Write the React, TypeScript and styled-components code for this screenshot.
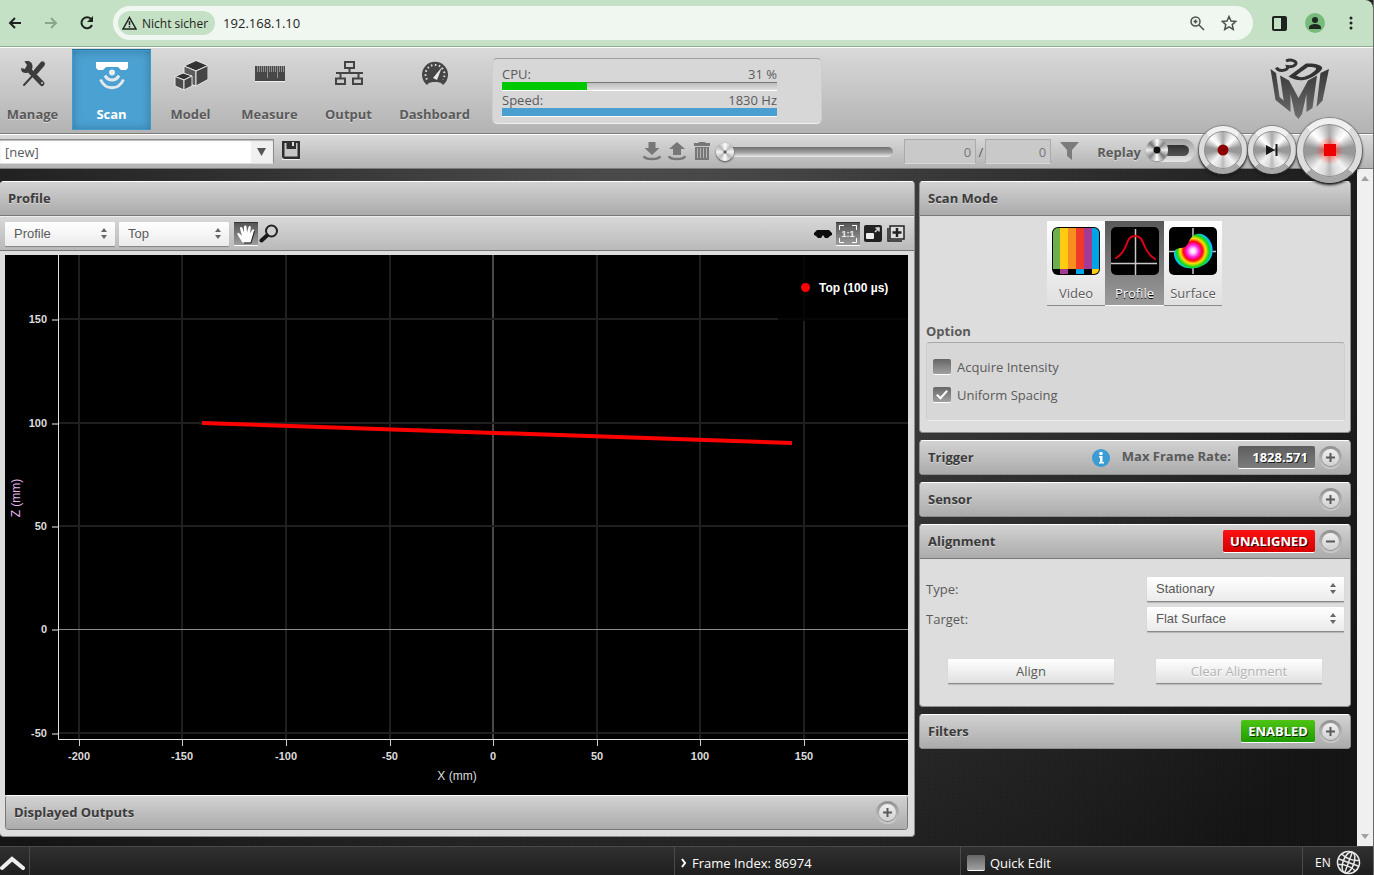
import React from "react";
import styled, { createGlobalStyle, css } from "styled-components";

const sans = `"Open Sans", "Noto Sans", sans-serif`;
const arial = `"Liberation Sans", Arial, sans-serif`;

const GlobalStyle = createGlobalStyle`
  *, *::before, *::after { box-sizing: border-box; }
  body { margin: 0; font-family: ${sans}; font-size: 13px; color: #5a5a5a; background: #222; }
  button, input, select { font: inherit; color: inherit; margin: 0; }
  button { border: 0; padding: 0; background: none; cursor: pointer; }
  svg { display: block; flex: none; }
  h2, p { margin: 0; }
`;

const Page = styled.div`
  display: flex;
  flex-direction: column;
  min-height: 100vh;
  border-right: 1px solid #6a6a6a;
`;

/* ---------- browser bar ---------- */

const BrowserBar = styled.div`
  display: flex;
  align-items: center;
  height: 47px;
  padding: 0 12px 0 6px;
  background: #c5e1c5;
  border-bottom: 1px solid #8fae90;
  border-top-right-radius: 8px;
  color: #1f2a20;
`;

const BrowserButton = styled.button<{ $dim?: boolean }>`
  display: grid;
  place-items: center;
  width: 18px;
  height: 24px;
  margin-right: 18px;
  color: ${(p) => (p.$dim ? "#8ba58c" : "#1f2320")};
`;

const AddressBar = styled.div`
  display: flex;
  flex: 1;
  align-items: center;
  height: 34px;
  margin: 0 0 0 -1px;
  padding: 0 16px 0 5px;
  gap: 8px;
  border-radius: 17px;
  background: #f0f7f0;
`;

const SecurityChip = styled.button`
  display: flex;
  align-items: center;
  gap: 5px;
  height: 24px;
  padding: 0 7px 0 4px;
  border-radius: 12px;
  background: #c5e1c5;
  color: #1f2320;
  font-size: 12px;
`;

const AddressInput = styled.input`
  flex: 1;
  min-width: 0;
  border: 0;
  outline: 0;
  padding: 0;
  background: transparent;
  color: #1f2320;
  font-size: 13px;
`;

const AddressIcon = styled.button`
  display: grid;
  place-items: center;
  width: 16px;
  height: 24px;
  margin-left: 8px;
  color: #4b524c;
`;

const BrowserTool = styled.button`
  display: grid;
  place-items: center;
  width: 20px;
  height: 24px;
  margin-left: 16px;
  color: #1f2320;
`;

/* ---------- main header ---------- */

const Header = styled.header`
  display: flex;
  height: 87px;
  border-top: 1px solid #fff;
  border-bottom: 1px solid #7d7d7d;
  background: linear-gradient(#d9d9d9, #b3b3b3);
`;

const Nav = styled.nav`
  display: flex;
  margin: 1px 0 0 -7px;
`;

const NavButton = styled.button<{ $active?: boolean }>`
  display: flex;
  flex-direction: column;
  align-items: center;
  width: 79px;
  height: 81px;
  padding-top: 9px;
  font-weight: 700;
  line-height: 18px;
  color: #5a5a5a;
  text-shadow: 0 1px 0 #dcdcdc;
  svg { margin-bottom: 13px; }
  &:last-child { width: 93px; }
  ${(p) =>
    p.$active &&
    css`
      color: #fff;
      text-shadow: none;
      background: #4ba1d1;
      border-top: 1px solid #1f6c98;
      padding-top: 8px;
      box-shadow: inset 0 0 0 1px #419aca, inset 0 0 10px #2f7298;
    `}
`;

const StatsBox = styled.section`
  width: 330px;
  height: 66px;
  margin: 10px 0 0 11px;
  padding: 6px 44px 0 9px;
  border: 1px solid #cdcdcd;
  border-top-color: #a0a0a0;
  border-bottom-color: #eee;
  border-radius: 5px;
  background: #d7d7d7;
`;

const StatRow = styled.div`
  display: flex;
  justify-content: space-between;
  height: 17px;
  line-height: 19px;
`;

const StatBar = styled.div`
  height: 9px;
  border-bottom: 1px solid #fff;
  background: linear-gradient(#777 0 1px, #bcbcbc 1px, #dedede);
`;

const StatFill = styled.div<{ $color: string }>`
  height: 100%;
  background: ${(p) => p.$color};
`;

const Logo = styled.a`
  margin: 10px 43px 0 auto;
`;

/* ---------- file / replay bar ---------- */

const FileBar = styled.div`
  position: relative;
  z-index: 2;
  display: flex;
  align-items: center;
  height: 35px;
  padding-right: 11px;
  border-top: 1px solid #fff;
  border-bottom: 1px solid #7d7d7d;
  background: linear-gradient(#dadada, #b3b3b3);
`;

const JobPicker = styled.label`
  position: relative;
  width: 274px;
  height: 25px;
  margin-right: 8px;
  svg { position: absolute; right: 8px; top: 8px; pointer-events: none; }
`;

const JobSelect = styled.select`
  appearance: none;
  width: 100%;
  height: 100%;
  padding: 0 24px 0 5px;
  border: 1px solid #8c8c8c;
  border-left: 0;
  border-bottom-color: #ddd;
  border-radius: 0;
  background: linear-gradient(90deg, #fff calc(100% - 22px), #f0f0f0 calc(100% - 22px));
  box-shadow: inset 0 1px 1px #bbb;
  color: #5a5a5a;
`;

const IconButton = styled.button`
  display: grid;
  place-items: center;
  height: 24px;
  margin-bottom: 2px;
  color: #777;
`;

const ReplayFiles = styled.div`
  display: flex;
  gap: 7px;
  margin: 0 5px 0 auto;
`;

const Slider = styled.input`
  appearance: none;
  width: 177px;
  height: 20px;
  background: transparent;
  &::-webkit-slider-runnable-track {
    height: 10px;
    border-radius: 5px;
    background: linear-gradient(#6f6f6f, #a2a2a2 55%, #eee);
  }
  &::-webkit-slider-thumb {
    appearance: none;
    width: 18px;
    height: 18px;
    margin-top: -4px;
    border-radius: 50%;
    border: 0;
    background: radial-gradient(circle, #555 0 1px, transparent 2px),
      conic-gradient(#fff, #bbb 45deg, #f6f6f6 90deg, #b5b5b5 135deg, #fff 180deg, #bbb 225deg, #f6f6f6 270deg, #b5b5b5 315deg, #fff);
    box-shadow: 0 1px 2px #444;
  }
`;

const FrameInput = styled.input`
  width: 72px;
  height: 25px;
  margin-left: 11px;
  padding: 0 4px;
  border: 1px solid #ababab;
  border-bottom-color: #d8d8d8;
  border-radius: 0;
  background: #c9c9c9;
  text-align: right;
  color: #777;
`;

const Slash = styled.span`
  width: 9px;
  text-align: center;
`;

const TotalInput = styled(FrameInput)`
  width: 66px;
  margin: 0 9px 0 0;
`;

const ReplayLabel = styled.label`
  display: flex;
  align-items: center;
  gap: 5px;
  margin: 0 3px 0 18px;
  font-weight: 700;
  text-shadow: 0 1px 0 #ddd;
`;

const ReplaySwitch = styled.input`
  appearance: none;
  display: flex;
  align-items: center;
  width: 49px;
  height: 23px;
  margin-bottom: 3px;
  border-radius: 12px;
  background: linear-gradient(#9f9f9f, #e6e6e6);
  &::before {
    content: "";
    z-index: 1;
    width: 22px;
    height: 22px;
    border-radius: 50%;
    background: radial-gradient(circle, #111 0 3px, transparent 4px),
      conic-gradient(#fff, #888 45deg, #eee 90deg, #777 135deg, #fff 180deg, #888 225deg, #eee 270deg, #777 315deg, #fff);
    box-shadow: 0 1px 1px #888;
  }
  &::after {
    content: "";
    width: 26px;
    height: 11px;
    margin-left: -5px;
    border-radius: 6px;
    background: linear-gradient(#303030, #555);
  }
`;

const DialButton = styled.button<{ $size: number; $glow?: boolean }>`
  display: grid;
  place-items: center;
  flex: none;
  width: ${(p) => p.$size}px;
  height: ${(p) => p.$size}px;
  margin: 0 0 3px 1px;
  border-radius: 50%;
  border: ${(p) => (p.$size > 50 ? 6 : 5)}px solid #dcdcdc;
  border-bottom-color: #a8a8a8;
  border-top-color: #f0f0f0;
  background: ${(p) => (p.$glow ? "radial-gradient(circle, rgba(255, 60, 48, 0.55) 0 6px, transparent 14px)," : "")}
    conic-gradient(#aaa, #efefef 30deg, #fff 45deg, #999 80deg, #999 100deg, #f2f2f2 140deg, #ddd 165deg, #bbb 180deg, #ddd 195deg, #f2f2f2 220deg, #999 260deg, #999 280deg, #fff 315deg, #efefef 330deg, #aaa);
  background-origin: border-box;
  box-shadow: inset 0 0 0 1px #8c8c8c, 0 2px 3px #111, 0 0 1px 1px #8a8a8a;
`;

/* ---------- workspace ---------- */

const Body = styled.div`
  display: flex;
  flex: 1;
`;

const Workspace = styled.main`
  display: flex;
  flex: 1;
  align-items: flex-start;
  gap: 4px;
  min-width: 0;
  padding: 12px 6px 8px 0;
  background:
    repeating-linear-gradient(90deg, rgba(255, 255, 255, 0.01) 0 1px, transparent 1px 3px),
    repeating-linear-gradient(rgba(0, 0, 0, 0.05) 0 1px, transparent 1px 4px),
    radial-gradient(ellipse 62% 120% at 47% 15%, #525252, #303030 50%, #141414);
`;

const ScrollBar = styled.div`
  display: flex;
  flex-direction: column;
  align-items: center;
  justify-content: space-between;
  width: 16px;
  padding: 7px 0;
  background: #f0f0f0;
`;

const Panel = styled.section`
  border: 1px solid #8d8d8d;
  border-top-color: #fff;
  border-radius: 4px;
  background: #dddddd;
`;

const ViewerPanel = styled(Panel)`
  flex: 1;
  min-width: 0;
  border-left: 0;
`;

const SideColumn = styled.aside`
  display: flex;
  flex: 0 0 432px;
  flex-direction: column;
  gap: 7px;
`;

const PanelHeader = styled.div<{ $open?: boolean }>`
  display: flex;
  align-items: center;
  height: ${(p) => (p.$open ? 34 : 33)}px;
  padding: 0 8px;
  border-bottom: ${(p) => (p.$open ? "1px solid #777" : "0")};
  border-radius: 3px 3px ${(p) => (p.$open ? "0 0" : "3px 3px")};
  background: linear-gradient(#d2d2d2, #ababab);
`;

const PanelTitle = styled.h2`
  padding-bottom: 2px;
  font-size: 13px;
  font-weight: 700;
  color: #3b3b3b;
  text-shadow: 0 1px 0 #d8d8d8;
`;

const HeaderTools = styled.div`
  display: flex;
  align-items: center;
  gap: 4px;
  margin-left: auto;
`;

const ExpandButton = styled.button`
  display: grid;
  place-items: center;
  width: 23px;
  height: 23px;
  border-radius: 50%;
  background: linear-gradient(#8f8f8f, #c8c8c8 90%);
  &::before { content: ""; grid-area: 1 / 1; width: 17px; height: 17px; border-radius: 50%; background: linear-gradient(#f0f0f0, #d0d0d0); box-shadow: 0 1px 1px #888; }
  svg { grid-area: 1 / 1; }
`;

const StatusTag = styled.output<{ $tone: "grey" | "red" | "green" }>`
  display: block;
  height: 23px;
  padding: 0 7px;
  border-radius: 2px;
  border-bottom: 1px solid #fff;
  color: #fff;
  font-weight: 700;
  line-height: 22px;
  text-shadow: 1px 1px 0 rgba(0, 0, 0, 0.75);
  background: ${(p) =>
    ({
      grey: "linear-gradient(#5e5e5e, #7c7c7c)",
      red: "linear-gradient(#fb1212, #d60000)",
      green: "linear-gradient(#4dc414, #1f9c00)",
    })[p.$tone]};
  ${(p) => p.$tone === "grey" && "min-width: 77px; text-align: right;"}
`;

const FrameRateLabel = styled.span`
  margin: 0 3px 0 8px;
  padding-bottom: 4px;
  font-weight: 700;
`;

const ViewerToolbar = styled.div`
  display: flex;
  align-items: center;
  height: 35px;
  padding: 0 8px 0 5px;
  gap: 4px;
  border-top: 1px solid #eee;
  border-bottom: 1px solid #777;
  background: linear-gradient(#d8d8d8, #bababa);
`;

const SelectBox = styled.span<{ $width: number }>`
  position: relative;
  display: block;
  width: ${(p) => p.$width}px;
  height: 24px;
  svg { position: absolute; right: 7px; top: 6px; pointer-events: none; }
`;

const SelectInput = styled.select`
  appearance: none;
  width: 100%;
  height: 100%;
  padding: 0 20px 1px 9px;
  border: 0;
  border-radius: 1px;
  background: linear-gradient(#fff, #ebebeb);
  box-shadow: 0 1px 0 #8a8a8a, 0 2px 1px #b5b5b5;
  font-family: ${arial};
  color: #5a5a5a;
`;

const ToolButton = styled.button<{ $pressed?: boolean }>`
  display: grid;
  place-items: center;
  width: ${(p) => (p.$pressed ? 24 : 20)}px;
  height: 24px;
  color: #1c1c1c;
  ${(p) =>
    p.$pressed &&
    css`
      background: linear-gradient(#555, #9d9d9d);
      border-top: 1px solid #333;
      border-bottom: 1px solid #fff;
    `}
`;

const ToolGroup = styled.div<{ $end?: boolean }>`
  display: flex;
  gap: ${(p) => (p.$end ? 3 : 1)}px;
  margin-left: ${(p) => (p.$end ? "auto" : "1px")};
`;

const ViewerContent = styled.div`
  padding: 4px 6px 6px 5px;
`;

const Chart = styled.svg`
  width: 100%;
  height: auto;
  background: #000;
  font-family: ${arial};
`;

const OutputsPanel = styled(Panel)`
  border-color: #fff #777 #777;
`;

const ScanBody = styled.div`
  padding: 5px 5px 11px 6px;
`;

const ModeGroup = styled.div`
  display: flex;
  justify-content: center;
  margin-right: 2px;
`;

const ModeButton = styled.button<{ $active?: boolean }>`
  display: flex;
  flex-direction: column;
  align-items: center;
  gap: 8px;
  width: ${(p) => (p.$active ? 59 : 58)}px;
  height: 85px;
  padding-top: 6px;
  border-bottom: 1px solid ${(p) => (p.$active ? "#fff" : "#8a8a8a")};
  background: ${(p) => (p.$active ? "linear-gradient(#585858, #9c9c9c)" : "linear-gradient(#fff, #e0e0e0)")};
  color: ${(p) => (p.$active ? "#fff" : "#5a5a5a")};
  text-shadow: ${(p) => (p.$active ? "0 1px 0 #000" : "0 1px 0 #fff")};
  line-height: 20px;
`;

const OptionTitle = styled.h2`
  margin: 15px 0 1px;
  font-size: 13px;
  line-height: 20px;
`;

const OptionBox = styled.div`
  height: 79px;
  padding: 10px 6px;
  border: 1px solid #cfcfcf;
  border-top-color: #a8a8a8;
  border-bottom-color: #eee;
  border-radius: 4px;
  background: #d7d7d7;
`;

const CheckLabel = styled.label`
  display: flex;
  align-items: center;
  gap: 6px;
  height: 28px;
`;

const CheckInput = styled.input`
  appearance: none;
  display: grid;
  place-items: center;
  width: 18px;
  height: 16px;
  border-radius: 2px;
  border-bottom: 1px solid #fff;
  background: linear-gradient(#666, #a0a0a0);
  &:checked::after {
    content: "";
    width: 6px;
    height: 11px;
    margin-top: -3px;
    border: solid #fff;
    border-width: 0 2px 2px 0;
    transform: rotate(42deg);
  }
`;

const AlignBody = styled.div`
  padding: 18px 6px 22px;
`;

const Field = styled.label`
  display: flex;
  align-items: center;
  justify-content: space-between;
  height: 24px;
  margin-bottom: 6px;
`;

const ActionRow = styled.div`
  display: flex;
  justify-content: space-between;
  margin: 28px 22px 0;
`;

const ActionButton = styled.button`
  width: 166px;
  height: 25px;
  border-bottom: 1px solid #8a8a8a;
  border-radius: 1px;
  background: linear-gradient(#fff, #e0e0e0);
  box-shadow: 0 1px 1px #bbb;
  color: #5a5a5a;
  &:disabled { color: #b3b3b3; text-shadow: 0 1px 0 #fff; }
`;

/* ---------- footer ---------- */

const Footer = styled.footer`
  display: flex;
  height: 29px;
  border-top: 1px solid #4a4a4a;
  background: linear-gradient(#303030, #1f1f1f);
  color: #fff;
`;

const FooterCell = styled.div<{ $width?: number }>`
  display: flex;
  align-items: center;
  gap: 5px;
  flex: ${(p) => (p.$width ? `0 0 ${p.$width}px` : "1")};
  padding: 3px 0 0 6px;
  border-left: 1px solid #4a4a4a;
`;

const LogToggle = styled.button`
  width: 29px;
  padding-top: 4px;
`;

const Language = styled.button`
  display: flex;
  align-items: center;
  gap: 5px;
  flex: 0 0 71px;
  padding: 2px 0 0 12px;
  border-left: 1px solid #4a4a4a;
  color: #fff;
  font-size: 12px;
`;

/* ---------- drawings ---------- */

const ToolsIcon = () => (
  <svg width="32" height="34" viewBox="0 0 32 34">
    <g stroke="#3c3c3c" fill="none" strokeLinecap="round">
      <path d="M25.500 6 19 13.500" strokeWidth="5" />
      <path d="M19 14 7 27" strokeWidth="2" />
      <path d="M11 11 25 25.500" strokeWidth="5" />
    </g>
    <path d="M4 10 8 11l2-4-2.500-3.500c5-1.500 8.500 1 8 6-1 5-8 7.500-11 3.500z" fill="#3c3c3c" />
    <circle cx="25" cy="25" r="1" fill="#ccc" />
  </svg>
);

const ScanIcon = () => (
  <svg width="32" height="34" viewBox="0 0 32 34">
    <path d="M0 4h32v6l-2 2h-5l-3-3H10l-3 3H2l-2-2z" fill="#fff" />
    <circle cx="16" cy="14.500" r="3" fill="#e8eef2" />
    <g fill="none" stroke="#e3e9ed" strokeWidth="3">
      <path d="M9 17.500c3 6 11 6 14 0" />
      <path d="M4.500 21.500c5 11 18 11 23 0" />
    </g>
  </svg>
);

const ModelIcon = () => (
  <svg width="34" height="34" viewBox="0 0 34 34">
    <g stroke="#e6e6e6" strokeWidth="1" strokeLinejoin="round">
      <path d="M10 8 22 2.500 34 7.500 22 13z" fill="#333" />
      <path d="M10 8l12 5v15l-12-4z" fill="#5c5c5c" />
      <path d="M22 13l12-5.500v14L22 28z" fill="#454545" />
      <path d="m1 18.500 8-3.500 9 3-8 4z" fill="#333" />
      <path d="m1 18.500 9 3.500v10l-9-4z" fill="#4c4c4c" />
      <path d="m10 22 8-4v10l-8 4z" fill="#454545" />
    </g>
  </svg>
);

const MeasureIcon = () => (
  <svg width="32" height="34" viewBox="0 0 32 34">
    <path d="M1 8h30v15H1z" fill="#474747" />
    <path d="M1 23.500h30" stroke="#eee" />
    <path d="M3.500 8v6M5.500 8v6M7.500 8v6M9.500 8v6M11.500 8v6M13.500 8v12M15.500 8v6M17.500 8v6M19.500 8v6M21.500 8v6M23.500 8v12M25.500 8v6M27.500 8v6M29.500 8v6" stroke="#8f8f8f" />
  </svg>
);

const OutputIcon = () => (
  <svg width="30" height="34" viewBox="0 0 30 34">
    <g fill="none" stroke="#444" strokeWidth="2">
      <path d="M11 4h9v6h-9zM2 20.500h9v5.500H2zM19 20.500h9v5.500h-9zM15.500 10v5M6.500 20v-5h18v5M2 15h27" />
    </g>
  </svg>
);

const DashboardIcon = () => (
  <svg width="28" height="34" viewBox="0 0 28 34">
    <path d="M6 27a13 13 0 1 1 16 0c-2-3-5-3-8-3s-6 0-8 3z" fill="#454545" />
    <path d="M6 21.500a9.500 9.500 0 1 1 16 0" fill="none" stroke="#ddd" strokeWidth="2" strokeDasharray="1.500 2.500" />
    <path d="m12 20 9-11-5 13z" fill="#e8e8e8" />
  </svg>
);

const LogoMark = () => (
  <svg width="60" height="62" viewBox="0 0 60 62">
    <defs>
      <linearGradient id="metal" x1="0" y1="10" x2="0" y2="60" gradientUnits="userSpaceOnUse">
        <stop offset="0" stopColor="#363636" />
        <stop offset="1" stopColor="#6c6c6c" />
      </linearGradient>
    </defs>
    <g fill="url(#metal)">
      <path d="M.5 11l5.500 4L9.500 39 20.500 48.500V54L5.500 42z" />
      <path d="M59 11l-8.500 4L46.500 49l6-6.500z" />
      <path d="M10 17.500l9 5L28.500 40 38 22.500l9-5L42.500 50l-6 4V36L32 56l-3.500 5L25 57l-4.500-21v13L14 45z" />
    </g>
    <path d="M6.500 9.500C8 14 19 13 17.500 8.500C24 9.500 28 5.500 25 3.500C22 1.500 19 1.500 16 3" fill="none" stroke="#333" strokeWidth="3" />
    <path
      fill="#333"
      fillRule="evenodd"
      d="M18.500 18.500L36 5.500C44 5 54 7 52 11C50 15 40 21 34 22C29 23 23 21.500 18.500 18.500zM26 17.500L38 9C43 9 47 9.500 46 11.500C43 15 37 18.500 33 19C30 19.500 28 18.500 26 17.500z"
    />
  </svg>
);

const FloppyIcon = () => (
  <svg width="18" height="19" viewBox="0 0 18 19">
    <path d="M0 0h18v18H2l-2-2z" fill="#2e2e2e" />
    <path d="M2.500 8h13v7.500h-13z" fill="#c6c6c6" />
    <path d="M2.500 2h2v6h-2zM14 2h1.500v6H14z" fill="#c6c6c6" />
    <path d="M10 1h2v4h-2z" fill="#ddd" />
    <path d="M0 18.500h18" stroke="#f0f0f0" />
  </svg>
);

const TransferIcon = ({ up }: { up?: boolean }) => (
  <svg width="18" height="20" viewBox="0 0 18 20">
    <path d={up ? "M9 1l8 7h-4v6H5V8H1z" : "M5.500 1h7v6h4L9 14 1.500 7h4z"} fill="currentColor" />
    <path d="M1 15c1 4 15 4 16 0" fill="none" stroke="currentColor" strokeWidth="2.500" />
  </svg>
);

const TrashIcon = () => (
  <svg width="18" height="20" viewBox="0 0 18 20">
    <path d="M1 2h4l1-1h6l1 1h4v3H1zM2 6h14v13H2z" fill="currentColor" />
    <path d="M4.500 7v10M7.500 7v10M10.500 7v10M13.500 7v10" stroke="#b4b4b4" />
  </svg>
);

const FunnelIcon = () => (
  <svg width="19" height="20" viewBox="0 0 19 20">
    <path d="M0 1h19l-7 8v10l-5-4V9z" fill="#7b7b7b" />
  </svg>
);

const StepperArrows = () => (
  <svg width="8" height="11" viewBox="0 0 8 11">
    <path d="M4 0l3 4H1zM4 11l3-4H1z" fill="#666" />
  </svg>
);

const PlusMinus = ({ minus }: { minus?: boolean }) => (
  <svg width="9" height="9" viewBox="0 0 9 9">
    <path d={minus ? "M0 4.500h9" : "M0 4.500h9M4.500 0v9"} stroke="#5a5a5a" strokeWidth="2" />
  </svg>
);

const HandIcon = () => (
  <svg width="20" height="20" viewBox="0 0 20 20">
    <path d="M6.500 18.500 2 11.500C.5 9 2 8 3.500 9.500L6 12 4 4.500C4 2.500 6 2.500 6.500 4L8 8.500V2.500C8.500 1 10.500 1 10.500 2.500l.5 6 1.500-5.500c.5-1.500 2.500-1 2.300.5L14 9.500l2-3.500c1-1.500 2.500-.5 2 1L16 13.500l-1.500 5z" fill="#fff" />
    <path d="m18.500 7-2 7-1.500 5H8" fill="none" stroke="#222" />
  </svg>
);

const MagnifierIcon = () => (
  <svg width="20" height="20" viewBox="0 0 20 20">
    <circle cx="12.500" cy="7" r="5.500" fill="#cfcfcf" stroke="#222" strokeWidth="2" />
    <path d="M8 11.500 2.500 16.500" stroke="#1a1a1a" strokeWidth="4" strokeLinecap="round" />
  </svg>
);

const GogglesIcon = () => (
  <svg width="18" height="10" viewBox="0 0 18 10">
    <path d="M0 4l3-3h12l3 3v2l-2 1-2 2h-3L9 6 7 9H4L2 7 0 6z" fill="#0c0c0c" />
  </svg>
);

const ActualSizeIcon = () => (
  <svg width="20" height="20" viewBox="0 0 20 20">
    <path d="M1.500 6V1.500H6M14 1.500h4.500V6M18.500 14v4.500H14M6 18.500H1.500V14" fill="none" stroke="#fff" />
    <text x="10" y="13" textAnchor="middle" fontSize="9" fontWeight="700" fill="#eee" fontFamily={arial}>1:1</text>
  </svg>
);

const FitIcon = () => (
  <svg width="18" height="17" viewBox="0 0 18 17">
    <rect width="18" height="17" rx="2" fill="#222" />
    <rect x="2" y="8" width="8" height="6" rx="1" fill="#eee" />
    <path d="M11 7l4-4M11.500 3H15v3.500" fill="none" stroke="#ddd" strokeWidth="1.500" />
  </svg>
);

const AddViewIcon = () => (
  <svg width="18" height="17" viewBox="0 0 18 17">
    <path d="M1 3v13h14" fill="none" stroke="#222" strokeWidth="1.500" />
    <rect x="3" y="1" width="14" height="13" fill="#ddd" stroke="#222" strokeWidth="1.500" />
    <path d="M10 3v9M5.500 7.500h9" stroke="#222" strokeWidth="2.500" />
  </svg>
);

const tvColors = ["#6ab04c", "#ffcc12", "#f78f1e", "#ef3a2a", "#a33a94", "#00a4e4"];

const VideoIcon = () => (
  <svg width="48" height="48" viewBox="0 0 48 48">
    <defs>
      <clipPath id="tvFrame"><rect x="1" y="1" width="46" height="46" rx="5" /></clipPath>
    </defs>
    <rect width="48" height="48" rx="6" fill="#000" />
    <g clipPath="url(#tvFrame)">
      {tvColors.map((color, i) => (
        <rect key={color} x={i * 8} y="1" width="8" height="41" fill={color} />
      ))}
      <path d="M8 42h8v5H8z" fill="#a33a94" />
      <path d="M24 42h8v5h-8z" fill="#00a4e4" />
      <path d="M40 42h8v5h-8z" fill="#ffcc12" />
    </g>
  </svg>
);

const ProfileIcon = () => (
  <svg width="48" height="48" viewBox="0 0 48 48">
    <rect width="48" height="48" rx="5" fill="#000" />
    <path d="M24.500 2v46M0 36.500h46" stroke="#c8c8c8" strokeWidth="1.500" />
    <path d="M5 31c14-8 8-22 19-22s6 15 20 23" fill="none" stroke="#dd0016" strokeWidth="2" strokeLinecap="round" />
  </svg>
);

const SurfaceIcon = () => (
  <svg width="48" height="48" viewBox="0 0 48 48">
    <defs>
      <radialGradient id="heat" gradientUnits="userSpaceOnUse" cx="24" cy="24" r="21">
        <stop offset="0" stopColor="#fff" />
        <stop offset=".12" stopColor="#ffd6ff" />
        <stop offset=".3" stopColor="#ff1ce0" />
        <stop offset=".45" stopColor="#ff0018" />
        <stop offset=".6" stopColor="#ffe000" />
        <stop offset=".76" stopColor="#16d716" />
        <stop offset=".9" stopColor="#00c8ff" />
        <stop offset="1" stopColor="#0000c0" />
      </radialGradient>
    </defs>
    <rect width="48" height="48" rx="5" fill="#000" />
    <path d="M24 1v46M0 24.500h47" stroke="#c8c8c8" strokeWidth="1.500" />
    <path d="M23 10c4-5 12-4 17 2 7 9 4 21-5 26-10 6-23 4-28-4-3-5-3-11 1-12 4-2 7 0 10-4 2-3 2-5 5-8z" fill="url(#heat)" />
  </svg>
);

const GlobeIcon = () => (
  <svg width="25" height="25" viewBox="0 0 25 25">
    <g fill="none" stroke="#e8e8e8" strokeWidth="1.500" transform="rotate(20 12.500 12.500)">
      <circle cx="12.500" cy="12.500" r="11" />
      <ellipse cx="12.500" cy="12.500" rx="5.500" ry="11" />
      <path d="M12.500 1.500v22M1.500 12.500h22M3.500 7c5 2.500 13 2.500 18 0M3.500 18c5-2.500 13-2.500 18 0" />
    </g>
  </svg>
);

/* ---------- chart ---------- */

const xTicks = [
  { value: -200, at: 74 }, { value: -150, at: 177 }, { value: -100, at: 281 }, { value: -50, at: 385 },
  { value: 0, at: 488 }, { value: 50, at: 592 }, { value: 100, at: 695 }, { value: 150, at: 799 },
];
const zTicks = [
  { value: 150, at: 64 }, { value: 100, at: 168 }, { value: 50, at: 271 }, { value: 0, at: 374 }, { value: -50, at: 478 },
];

const ProfileChart = () => (
  <Chart viewBox="0 0 903 540" role="img" aria-label="Profile">
    {xTicks.map((t) => (
      <g key={t.value}>
        <path d={`M${t.at} 0V484`} stroke={t.value === 0 ? "#484848" : "#1f1f1f"} strokeWidth="2" />
        <path d={`M${t.at + 0.5} 485v6`} stroke="#ccc" />
        <text x={t.at} y="505" textAnchor="middle" fontSize="11" fontWeight="700" fill="#ddd">{t.value}</text>
      </g>
    ))}
    {zTicks.map((t) => (
      <g key={t.value}>
        {t.value === 0 ? (
          <path d="M54 374.500H903" stroke="#8c8c8c" />
        ) : (
          <path d={`M54 ${t.at}H903`} stroke="#1f1f1f" strokeWidth="2" />
        )}
        <path d={`M47 ${t.at + 1}h6`} stroke="#777" strokeWidth="2" />
        <text x="42" y={t.at + 4} textAnchor="end" fontSize="11" fontWeight="700" fill="#ddd">{t.value}</text>
      </g>
    ))}
    <path d="M53.500 0V484.500H903" fill="none" stroke="#e0e0e0" />
    <path d="M197 168 787 188" stroke="#f00" strokeWidth="4" />
    <rect x="773" y="0" width="130" height="66" fill="#000" fillOpacity=".8" />
    <circle cx="800.500" cy="32.500" r="4.500" fill="#f00" />
    <text x="814" y="37" fontSize="12" fontWeight="700" fill="#fff">Top (100 µs)</text>
    <text x="452" y="525" textAnchor="middle" fontSize="12" fill="#ddd">X (mm)</text>
    <text transform="translate(15 243) rotate(-90)" textAnchor="middle" fontSize="12" fill="#e4b6ee">Z (mm)</text>
  </Chart>
);

/* ---------- small composites ---------- */

function Select({ id, width, value, label }: { id: string; width: number; value: string; label?: string }) {
  return (
    <SelectBox $width={width}>
      <SelectInput id={id} aria-label={label}>
        <option>{value}</option>
      </SelectInput>
      <StepperArrows />
    </SelectBox>
  );
}

function Collapsible({ title, open, tools, children }: { title: string; open?: boolean; tools?: React.ReactNode; children?: React.ReactNode }) {
  return (
    <Panel>
      <PanelHeader $open={open}>
        <PanelTitle>{title}</PanelTitle>
        <HeaderTools>
          {tools}
          <ExpandButton aria-label={title} aria-expanded={!!open}>
            <PlusMinus minus={open} />
          </ExpandButton>
        </HeaderTools>
      </PanelHeader>
      {children}
    </Panel>
  );
}

const navItems = [
  { name: "Manage", icon: <ToolsIcon /> },
  { name: "Scan", icon: <ScanIcon />, active: true },
  { name: "Model", icon: <ModelIcon /> },
  { name: "Measure", icon: <MeasureIcon /> },
  { name: "Output", icon: <OutputIcon /> },
  { name: "Dashboard", icon: <DashboardIcon /> },
];

const modes = [
  { name: "Video", icon: <VideoIcon /> },
  { name: "Profile", icon: <ProfileIcon />, active: true },
  { name: "Surface", icon: <SurfaceIcon /> },
];

export default function App() {
  return (
    <Page>
      <GlobalStyle />
      <BrowserBar>
        <BrowserButton aria-label="Back">
          <svg width="14" height="14" viewBox="0 0 14 14"><path d="M13 7H2M7 2 2 7l5 5" fill="none" stroke="currentColor" strokeWidth="2" /></svg>
        </BrowserButton>
        <BrowserButton aria-label="Forward" $dim>
          <svg width="14" height="14" viewBox="0 0 14 14"><path d="M1 7h11M7 2l5 5-5 5" fill="none" stroke="currentColor" strokeWidth="2" /></svg>
        </BrowserButton>
        <BrowserButton aria-label="Reload">
          <svg width="14" height="14" viewBox="0 0 14 14"><path d="M12 9A5.500 5.500 0 1 1 11 3l1 1" fill="none" stroke="currentColor" strokeWidth="2" /><path d="M13 0v6H7z" fill="currentColor" /></svg>
        </BrowserButton>
        <AddressBar>
          <SecurityChip>
            <svg width="15" height="14" viewBox="0 0 15 14"><path d="M7.500 1.500 14 13H1z" fill="none" stroke="currentColor" strokeWidth="1.500" /><path d="M7.500 5v4M7.500 10v1.500" stroke="currentColor" strokeWidth="1.500" /></svg>
            Nicht sicher
          </SecurityChip>
          <AddressInput aria-label="Address" defaultValue="192.168.1.10" />
          <AddressIcon aria-label="Zoom">
            <svg width="15" height="15" viewBox="0 0 15 15"><g fill="none" stroke="currentColor" strokeWidth="1.500"><circle cx="5.500" cy="5.500" r="4.500" /><path d="M9 9l5 5M5.500 3.500v4M3.500 5.500h4" /></g></svg>
          </AddressIcon>
          <AddressIcon aria-label="Bookmark">
            <svg width="16" height="16" viewBox="0 0 16 16"><path d="m8 1.500 2 4.500 4.800.4-3.600 3.200 1.100 4.800L8 11.800l-4.300 2.600 1.100-4.800L1.200 6.400 6 6z" fill="none" stroke="currentColor" strokeWidth="1.500" /></svg>
          </AddressIcon>
        </AddressBar>
        <BrowserTool aria-label="Side panel">
          <svg width="15" height="15" viewBox="0 0 15 15"><rect x="1" y="1" width="13" height="13" rx="1" fill="none" stroke="currentColor" strokeWidth="2" /><path d="M9 1h5v13H9z" fill="currentColor" /></svg>
        </BrowserTool>
        <BrowserTool aria-label="Account">
          <svg width="20" height="20" viewBox="0 0 20 20"><circle cx="10" cy="10" r="10" fill="#77ba7b" /><circle cx="10" cy="7" r="3" fill="#1d2a1e" /><path d="M4 16v-2c1-4 11-4 12 0v2z" fill="#1d2a1e" /></svg>
        </BrowserTool>
        <BrowserTool aria-label="Menu">
          <svg width="4" height="14" viewBox="0 0 4 14"><g fill="currentColor"><circle cx="2" cy="2" r="1.500" /><circle cx="2" cy="7" r="1.500" /><circle cx="2" cy="12" r="1.500" /></g></svg>
        </BrowserTool>
      </BrowserBar>

      <Header>
        <Nav>
          {navItems.map((item) => (
            <NavButton key={item.name} $active={item.active}>
              {item.icon}
              {item.name}
            </NavButton>
          ))}
        </Nav>
        <StatsBox>
          <StatRow><span>CPU:</span><span>31 %</span></StatRow>
          <StatBar><StatFill $color="#00c800" style={{ width: "31%" }} /></StatBar>
          <StatRow><span>Speed:</span><span>1830 Hz</span></StatRow>
          <StatBar><StatFill $color="#4a9fd0" style={{ width: "100%" }} /></StatBar>
        </StatsBox>
        <Logo href="#" aria-label="LMI 3D"><LogoMark /></Logo>
      </Header>

      <FileBar>
        <JobPicker>
          <JobSelect aria-label="Job"><option>[new]</option></JobSelect>
          <svg width="9" height="9" viewBox="0 0 9 9"><path d="M0 1h9L4.500 9z" fill="#555" /></svg>
        </JobPicker>
        <IconButton aria-label="Save"><FloppyIcon /></IconButton>
        <ReplayFiles>
          <IconButton aria-label="Download"><TransferIcon /></IconButton>
          <IconButton aria-label="Upload"><TransferIcon up /></IconButton>
          <IconButton aria-label="Delete"><TrashIcon /></IconButton>
        </ReplayFiles>
        <Slider type="range" aria-label="Frame" min="0" max="100" defaultValue="0" />
        <FrameInput aria-label="Current frame" defaultValue="0" />
        <Slash>/</Slash>
        <TotalInput aria-label="Frame count" defaultValue="0" />
        <IconButton aria-label="Filter"><FunnelIcon /></IconButton>
        <ReplayLabel>Replay<ReplaySwitch type="checkbox" role="switch" /></ReplayLabel>
        <DialButton $size={48} aria-label="Record">
          <svg width="12" height="12" viewBox="0 0 12 12"><circle cx="6" cy="6" r="5.500" fill="#8c0000" /></svg>
        </DialButton>
        <DialButton $size={48} aria-label="Step">
          <svg width="14" height="12" viewBox="0 0 14 12"><path d="M1 1l9 5-9 5zM10.500 0h2v12h-2z" fill="#161616" /></svg>
        </DialButton>
        <DialButton $size={65} $glow aria-label="Stop">
          <svg width="12" height="12" viewBox="0 0 12 12"><path d="M0 0h12v12H0z" fill="#ee0000" /></svg>
        </DialButton>
      </FileBar>

      <Body>
        <Workspace>
          <ViewerPanel>
            <PanelHeader $open><PanelTitle>Profile</PanelTitle></PanelHeader>
            <ViewerToolbar>
              <Select id="view" width={110} value="Profile" label="View" />
              <Select id="source" width={110} value="Top" label="Source" />
              <ToolGroup>
                <ToolButton $pressed aria-label="Pan"><HandIcon /></ToolButton>
                <ToolButton aria-label="Zoom"><MagnifierIcon /></ToolButton>
              </ToolGroup>
              <ToolGroup $end>
                <ToolButton aria-label="Safety"><GogglesIcon /></ToolButton>
                <ToolButton $pressed aria-label="Actual size"><ActualSizeIcon /></ToolButton>
                <ToolButton aria-label="Fit"><FitIcon /></ToolButton>
                <ToolButton aria-label="Add view"><AddViewIcon /></ToolButton>
              </ToolGroup>
            </ViewerToolbar>
            <ViewerContent>
              <ProfileChart />
              <OutputsPanel>
                <PanelHeader $open={false}>
                  <PanelTitle>Displayed Outputs</PanelTitle>
                  <HeaderTools>
                    <ExpandButton aria-label="Displayed Outputs"><PlusMinus /></ExpandButton>
                  </HeaderTools>
                </PanelHeader>
              </OutputsPanel>
            </ViewerContent>
          </ViewerPanel>

          <SideColumn>
            <Panel>
              <PanelHeader $open><PanelTitle>Scan Mode</PanelTitle></PanelHeader>
              <ScanBody>
                <ModeGroup>
                  {modes.map((mode) => (
                    <ModeButton key={mode.name} $active={mode.active}>
                      {mode.icon}
                      {mode.name}
                    </ModeButton>
                  ))}
                </ModeGroup>
                <OptionTitle>Option</OptionTitle>
                <OptionBox>
                  <CheckLabel><CheckInput type="checkbox" />Acquire Intensity</CheckLabel>
                  <CheckLabel><CheckInput type="checkbox" defaultChecked />Uniform Spacing</CheckLabel>
                </OptionBox>
              </ScanBody>
            </Panel>
            <Collapsible
              title="Trigger"
              tools={
                <>
                  <svg width="18" height="18" viewBox="0 0 18 18"><circle cx="9" cy="9" r="9" fill="#3b9bd3" /><circle cx="9" cy="4.500" r="1.800" fill="#fff" /><path d="M7 7h3.500v6H12v1.500H7V13h1V8.500H7z" fill="#fff" /></svg>
                  <FrameRateLabel>Max Frame Rate:</FrameRateLabel>
                  <StatusTag $tone="grey">1828.571</StatusTag>
                </>
              }
            />
            <Collapsible title="Sensor" />
            <Collapsible title="Alignment" open tools={<StatusTag $tone="red">UNALIGNED</StatusTag>}>
              <AlignBody>
                <Field htmlFor="type">Type:<Select id="type" width={197} value="Stationary" /></Field>
                <Field htmlFor="target">Target:<Select id="target" width={197} value="Flat Surface" /></Field>
                <ActionRow>
                  <ActionButton>Align</ActionButton>
                  <ActionButton disabled>Clear Alignment</ActionButton>
                </ActionRow>
              </AlignBody>
            </Collapsible>
            <Collapsible title="Filters" tools={<StatusTag $tone="green">ENABLED</StatusTag>} />
          </SideColumn>
        </Workspace>
        <ScrollBar>
          <svg width="8" height="5" viewBox="0 0 8 5"><path d="M4 0l4 5H0z" fill="#a0a0a0" /></svg>
          <svg width="8" height="5" viewBox="0 0 8 5"><path d="M4 5 0 0h8z" fill="#a0a0a0" /></svg>
        </ScrollBar>
      </Body>

      <Footer>
        <LogToggle aria-label="Log">
          <svg width="26" height="16" viewBox="0 0 26 16"><path d="M2 13 12 4l11 9" fill="none" stroke="#eee" strokeWidth="4" strokeLinecap="round" /></svg>
        </LogToggle>
        <FooterCell />
        <FooterCell $width={286}>
          <svg width="6" height="10" viewBox="0 0 6 10"><path d="M1 1l3 4-3 4" fill="none" stroke="#fff" strokeWidth="2" /></svg>
          Frame Index: 86974
        </FooterCell>
        <FooterCell $width={342} as="label">
          <CheckInput type="checkbox" />
          Quick Edit
        </FooterCell>
        <Language>EN<GlobeIcon /></Language>
      </Footer>
    </Page>
  );
}
